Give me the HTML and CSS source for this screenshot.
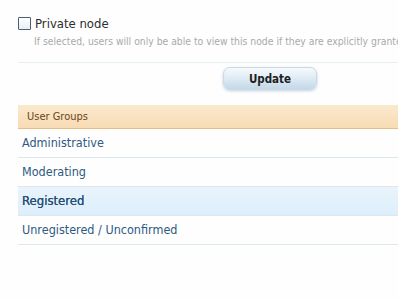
FILE: index.html
```html
<!DOCTYPE html>
<html lang="en">
<head>
    <meta charset="UTF-8">
    <title>Node Permissions</title>
    <link rel="stylesheet" href="styles.css">
</head>
<body>
    <div class="page">
        <form class="node-form">
            <div class="check-row">
                <label class="check-label">
                    <input type="checkbox" class="check-box">
                    <span>Private node</span>
                </label>
                <p class="hint">If selected, users will only be able to view this node if they are explicitly granted permission.</p>
            </div>

            <div class="submit-unit">
                <button type="button" class="button">Update</button>
            </div>
        </form>

        <div class="group-list">
            <h3 class="list-header">User Groups</h3>
            <a class="list-item" href="#">Administrative</a>
            <a class="list-item" href="#">Moderating</a>
            <a class="list-item active" href="#">Registered</a>
            <a class="list-item" href="#">Unregistered / Unconfirmed</a>
        </div>
    </div>
</body>
</html>
```

FILE: styles.css
```css
html, body {
    margin: 0;
    padding: 0;
    background: #fefeff;
    overflow: hidden;
}
body {
    font-family: "DejaVu Sans", Tahoma, sans-serif;
    font-stretch: condensed;
    color: #333;
}
.page {
    width: 520px;
    margin-left: 18px;
    padding-top: 16px;
}
.check-row {
    padding-bottom: 15px;
    border-bottom: 1px solid #e6eff2;
}
.check-label {
    display: flex;
    align-items: center;
    gap: 4px;
    font-size: 13px;
    color: #2d2d2d;
}
.check-box {
    appearance: none;
    width: 13px;
    height: 13px;
    margin: 0;
    border: 1px solid #4d5f70;
    border-radius: 1px;
    background: linear-gradient(#fff, #e8eef4);
}
.hint {
    margin: 4px 0 0 16px;
    font-size: 10.3px;
    color: #a9a9a9;
    white-space: nowrap;
}
.submit-unit {
    padding: 4px 0 0 205px;
}
.button {
    width: 94px;
    height: 23px;
    border: 1px solid #c9d9e5;
    border-radius: 7px;
    background: linear-gradient(#f6fafd, #d9e7f1 60%, #c3d8e8);
    box-shadow: 0 1px 3px rgba(90, 120, 150, 0.35);
    font-family: inherit;
    font-stretch: condensed;
    font-size: 11.5px;
    font-weight: bold;
    color: #1e1e1e;
    cursor: pointer;
}
.group-list {
    margin-top: 15px;
}
.list-header {
    margin: 0;
    height: 23px;
    line-height: 23px;
    padding-left: 9px;
    font-size: 11px;
    font-weight: normal;
    color: #6b4518;
    background: linear-gradient(#fbe9cf, #f7dbb4);
    border-bottom: 1px solid #e2bf88;
}
.list-item {
    display: block;
    height: 28px;
    line-height: 28px;
    padding-left: 4px;
    font-size: 12.5px;
    color: #2f5a80;
    text-decoration: none;
    border-bottom: 1px solid #dbe8ef;
}
.list-item.active {
    background: linear-gradient(#e9f4fc, #ddeefb);
    font-size: 13px;
    color: #264f72;
    text-shadow: 0 0 0.4px #264f72;
}
```
